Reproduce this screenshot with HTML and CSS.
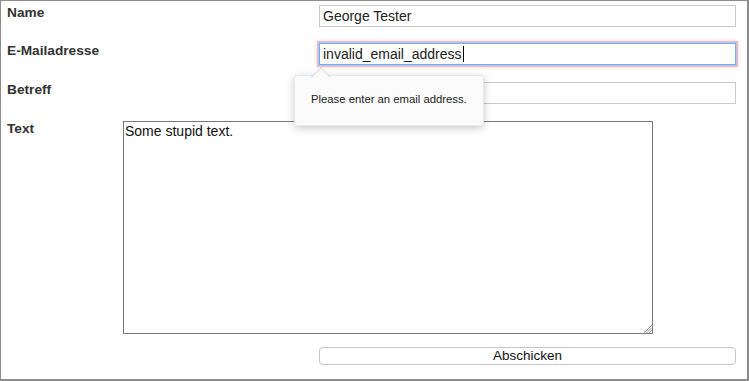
FILE: index.html
```html
<!DOCTYPE html>
<html lang="de">
<head>
<meta charset="utf-8">
<title>Kontakt</title>
<link rel="stylesheet" href="styles.css">
</head>
<body>
<form class="form">
  <div class="row row-name">
    <label class="label">Name</label>
    <input class="field col3" type="text" value="George Tester">
  </div>
  <div class="row row-email">
    <label class="label">E-Mailadresse</label>
    <div class="col3 email-wrap">
      <div class="field field-invalid"><span>invalid_email_address</span><span class="caret"></span></div>
      <div class="tooltip">Please enter an email address.</div>
    </div>
  </div>
  <div class="row row-subject">
    <label class="label">Betreff</label>
    <input class="field col3" type="text" placeholder="Test subject">
  </div>
  <div class="row row-text">
    <label class="label">Text</label>
    <div class="area-wrap">
      <textarea class="area">Some stupid text.</textarea>
      <svg class="grip" width="9" height="9" viewBox="0 0 9 9">
        <path d="M9 1 L1 9 M9 3.5 L3.5 9 M9 6 L6 9" stroke="#8a8a8a" stroke-width="0.9" fill="none"/>
      </svg>
    </div>
  </div>
  <div class="row row-submit">
    <button class="button col3" type="button">Abschicken</button>
  </div>
</form>
</body>
</html>
```
FILE: styles.css
```css
html, body {
  margin: 0;
  padding: 0;
}
body {
  width: 749px;
  height: 381px;
  box-sizing: border-box;
  border-style: solid;
  border-color: #8c8c8c;
  border-width: 1px 2px 2px 1px;
  background: #fff;
  font-family: "Liberation Sans", Arial, sans-serif;
  overflow: hidden;
}
.form {
  display: flex;
  flex-direction: column;
  padding: 4px 11px 0 6px;
}
.row {
  display: grid;
  grid-template-columns: 116px 196px 417px;
  align-items: start;
}
.row-email { margin-top: 16px; }
.row-subject { margin-top: 17px; }
.row-text { margin-top: 17px; }
.row-submit { margin-top: 13px; }
.label {
  grid-column: 1;
  font-weight: bold;
  font-size: 13.7px;
  line-height: 16px;
  color: #333;
  white-space: nowrap;
}
.col3 { grid-column: 3; }
.field {
  box-sizing: border-box;
  width: 417px;
  height: 22px;
  margin: 0;
  padding: 0 3px;
  border: 1px solid #c9c9c9;
  border-radius: 0;
  background: #fff;
  font-family: "Liberation Sans", Arial, sans-serif;
  font-size: 14px;
  color: #222;
  outline: none;
}
.field::placeholder { color: #a8a8a8; }
.email-wrap { position: relative; }
.field-invalid {
  display: flex;
  align-items: center;
  padding-left: 3px;
  border: 1px solid #7eaaf0;
  box-shadow: 0 0 0 1px #a9c8f5, 0 0 0 2px rgba(255, 170, 180, 0.75), 0 0 3px 2px rgba(255, 150, 160, 0.5);
}
.caret {
  width: 1px;
  height: 16px;
  margin-left: 1px;
  background: #000;
}
.tooltip {
  position: absolute;
  left: -25px;
  top: 32px;
  width: 190px;
  height: 51px;
  box-sizing: border-box;
  padding: 0 0 3px 16px;
  display: flex;
  align-items: center;
  border-radius: 4px;
  border: 1px solid rgba(0, 0, 0, 0.08);
  background: rgba(251, 251, 251, 0.97);
  box-shadow: 0 2px 8px rgba(0, 0, 0, 0.22);
  font-size: 11.3px;
  color: #222;
  z-index: 2;
}
.tooltip::before {
  content: "";
  position: absolute;
  left: 19px;
  top: -6px;
  width: 13px;
  height: 13px;
  background: #fbfbfb;
  border-left: 1px solid rgba(0, 0, 0, 0.14);
  border-top: 1px solid rgba(0, 0, 0, 0.14);
  transform: rotate(45deg);
}
.area-wrap {
  grid-column: 2 / 4;
  position: relative;
  width: 530px;
  height: 213px;
}
.area {
  display: block;
  box-sizing: border-box;
  width: 530px;
  height: 213px;
  margin: 0;
  padding: 1px 1px;
  border: 1px solid #7a7a7a;
  resize: none;
  font-family: "Liberation Sans", Arial, sans-serif;
  font-size: 14px;
  color: #111;
  outline: none;
}
.grip {
  position: absolute;
  right: 1px;
  bottom: 1px;
}
.button {
  box-sizing: border-box;
  width: 417px;
  height: 18px;
  margin: 0;
  padding: 0;
  border: 1px solid #c6c6c6;
  border-radius: 4px;
  background: #fff;
  font-family: "Liberation Sans", Arial, sans-serif;
  font-size: 13.5px;
  line-height: 16px;
  color: #111;
}
```
